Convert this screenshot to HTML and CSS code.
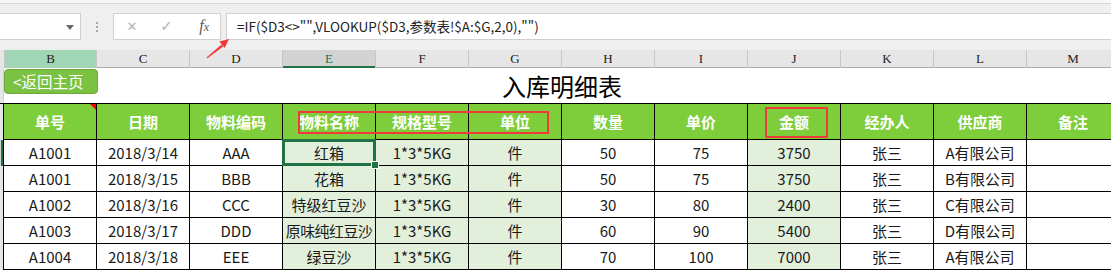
FILE: index.html
```html
<!DOCTYPE html>
<html lang="zh-CN">

<head>
  <meta charset="UTF-8">
  <meta name="viewport" content="width=device-width, initial-scale=1.0">
  <title>入库明细表</title>
  <link rel="stylesheet" href="styles.css">
</head>

<body>
  <div class="app">
    <!-- Formula bar -->
    <div class="toolbar">
      <div class="name-box"><span class="caret"></span></div>
      <div class="grip"><i></i><i></i><i></i></div>
      <div class="fx-buttons">
        <span class="fx-btn cancel">✕</span>
        <span class="fx-btn ok">✓</span>
        <span class="fx-btn fx"><em>f</em><em class="x">x</em></span>
      </div>
      <div class="formula">=IF($D3&lt;&gt;"",VLOOKUP($D3,参数表!$A:$G,2,0),"")</div>
    </div>

    <!-- Column letters -->
    <div class="row col-heads">
      <div class="corner"></div>
      <div class="col-head selected">B</div>
      <div class="col-head">C</div>
      <div class="col-head">D</div>
      <div class="col-head active">E</div>
      <div class="col-head">F</div>
      <div class="col-head">G</div>
      <div class="col-head">H</div>
      <div class="col-head">I</div>
      <div class="col-head">J</div>
      <div class="col-head">K</div>
      <div class="col-head">L</div>
      <div class="col-head">M</div>
    </div>

    <!-- Title row -->
    <div class="row title-row">
      <div class="row-strip"></div>
      <div class="title-cell">入库明细表</div>
      <a class="home-btn" href="#">&lt;返回主页</a>
    </div>

    <!-- Table header -->
    <div class="row head-row">
      <div class="row-strip"></div>
      <div class="cell th has-comment">单号</div>
      <div class="cell th">日期</div>
      <div class="cell th">物料编码</div>
      <div class="cell th">物料名称</div>
      <div class="cell th">规格型号</div>
      <div class="cell th">单位</div>
      <div class="cell th">数量</div>
      <div class="cell th">单价</div>
      <div class="cell th">金额</div>
      <div class="cell th">经办人</div>
      <div class="cell th">供应商</div>
      <div class="cell th">备注</div>
    </div>

    <div class="row data-row">
      <div class="row-strip current"></div>
      <div class="cell">A1001</div>
      <div class="cell">2018/3/14</div>
      <div class="cell">AAA</div>
      <div class="cell tint selected-cell">红箱<span class="handle"></span></div>
      <div class="cell tint">1*3*5KG</div>
      <div class="cell tint">件</div>
      <div class="cell">50</div>
      <div class="cell">75</div>
      <div class="cell tint">3750</div>
      <div class="cell">张三</div>
      <div class="cell">A有限公司</div>
      <div class="cell"></div>
    </div>

    <div class="row data-row">
      <div class="row-strip"></div>
      <div class="cell">A1001</div>
      <div class="cell">2018/3/15</div>
      <div class="cell">BBB</div>
      <div class="cell tint">花箱</div>
      <div class="cell tint">1*3*5KG</div>
      <div class="cell tint">件</div>
      <div class="cell">50</div>
      <div class="cell">75</div>
      <div class="cell tint">3750</div>
      <div class="cell">张三</div>
      <div class="cell">B有限公司</div>
      <div class="cell"></div>
    </div>

    <div class="row data-row">
      <div class="row-strip"></div>
      <div class="cell">A1002</div>
      <div class="cell">2018/3/16</div>
      <div class="cell">CCC</div>
      <div class="cell tint">特级红豆沙</div>
      <div class="cell tint">1*3*5KG</div>
      <div class="cell tint">件</div>
      <div class="cell">30</div>
      <div class="cell">80</div>
      <div class="cell tint">2400</div>
      <div class="cell">张三</div>
      <div class="cell">C有限公司</div>
      <div class="cell"></div>
    </div>

    <div class="row data-row">
      <div class="row-strip"></div>
      <div class="cell">A1003</div>
      <div class="cell">2018/3/17</div>
      <div class="cell">DDD</div>
      <div class="cell tint tight">原味纯红豆沙</div>
      <div class="cell tint">1*3*5KG</div>
      <div class="cell tint">件</div>
      <div class="cell">60</div>
      <div class="cell">90</div>
      <div class="cell tint">5400</div>
      <div class="cell">张三</div>
      <div class="cell">D有限公司</div>
      <div class="cell"></div>
    </div>

    <div class="row data-row">
      <div class="row-strip"></div>
      <div class="cell">A1004</div>
      <div class="cell">2018/3/18</div>
      <div class="cell">EEE</div>
      <div class="cell tint">绿豆沙</div>
      <div class="cell tint">1*3*5KG</div>
      <div class="cell tint">件</div>
      <div class="cell">70</div>
      <div class="cell">100</div>
      <div class="cell tint">7000</div>
      <div class="cell">张三</div>
      <div class="cell">A有限公司</div>
      <div class="cell"></div>
    </div>

    <!-- Annotations drawn over the sheet -->
    <div class="mark mark-name"></div>
    <div class="mark mark-amount"></div>
    <svg class="arrow" width="40" height="30" viewBox="200 35 40 30">
      <path d="M206.5 57.5 L221.6 44.6 L223.2 46.4 L207.5 58.3 Z" fill="#f03a3a" />
      <path d="M229 39 L219.3 41.4 L224.7 47.9 Z" fill="#f03a3a" />
    </svg>
  </div>
</body>

</html>
```

FILE: styles.css
```css
/* Page reset */
body {
  margin: 0;
  overflow: hidden;
  background-color: #ffffff;
  font-family: "Noto Sans CJK SC", "Noto Sans", sans-serif;
  color: #1a1a1a;
}

.app {
  position: relative;
  width: 1111px;
  height: 272px;
  overflow: hidden;
}

/* Formula bar */
.toolbar {
  height: 50px;
  box-sizing: border-box;
  margin: 0;
  padding-top: 10px;
  border-top: 3px solid #f7f7f7;
  background-color: #efefef;
  display: flex;
  align-items: flex-start;
  box-shadow: inset 0 1px 0 #d6d6d6;
}

.name-box {
  width: 81px;
  height: 27px;
  box-sizing: border-box;
  background-color: #ffffff;
  border: 1px solid #d0d0d0;
  border-left: none;
  position: relative;
}

.caret {
  position: absolute;
  right: 6px;
  top: 11px;
  border-left: 4px solid transparent;
  border-right: 4px solid transparent;
  border-top: 5px solid #6b6b6b;
}

.grip {
  width: 32px;
  height: 27px;
  display: flex;
  flex-direction: column;
  align-items: center;
  justify-content: center;
  gap: 2px;
}

.grip i {
  display: block;
  width: 2px;
  height: 2px;
  background-color: #a8a8a8;
}

.fx-buttons {
  width: 108px;
  height: 27px;
  box-sizing: border-box;
  background-color: #ffffff;
  border: 1px solid #d0d0d0;
  display: flex;
  align-items: center;
}

.fx-btn {
  width: 36px;
  text-align: center;
  color: #b4b4b4;
  font-family: "DejaVu Sans", sans-serif;
  font-size: 15px;
  line-height: 25px;
}

.fx-btn.cancel {
  padding-left: 2px;
  font-size: 13px;
}

.fx-btn.ok {
  font-weight: bold;
  padding-left: 3px;
}

.fx-btn.fx {
  color: #5a5a5a;
  font-family: "Liberation Serif", serif;
  font-size: 16px;
  padding-left: 6px;
}

.fx-btn.fx .x {
  font-size: 12px;
}

.formula {
  flex: 1;
  height: 27px;
  box-sizing: border-box;
  margin-left: 5px;
  padding-left: 10px;
  background-color: #ffffff;
  border: 1px solid #d0d0d0;
  border-right: none;
  font-size: 13.5px;
  line-height: 25px;
  color: #222222;
  white-space: nowrap;
}

/* Sheet grid */
.row {
  display: grid;
  grid-template-columns: 4px repeat(12, 93px);
}

.col-heads {
  height: 18px;
  background-color: #e6e6e6;
  border-bottom: 1px solid #ababab;
  box-sizing: border-box;
}

.corner {
  background-color: #e6e6e6;
}

.col-head {
  box-sizing: border-box;
  border-right: 1px solid #c6c6c6;
  text-align: center;
  font-family: "Liberation Serif", serif;
  font-size: 13px;
  line-height: 18px;
  color: #222222;
}

.col-head.selected {
  background-color: #a0d6b5;
  border-left: 1px solid #c6c6c6;
}

.col-head.active {
  background-color: #d3d3d3;
  color: #217346;
  box-shadow: inset 0 -2px 0 #217346;
}

.row-strip {
  background-color: #e6e6e6;
  border-right: 1px solid #000000;
}

.row-strip.current {
  background-color: #d3d3d3;
  box-shadow: inset -2px 0 0 #217346;
}

.title-row {
  height: 36px;
  position: relative;
  border-bottom: 1px solid #000000;
  box-sizing: border-box;
}

.title-row .row-strip {
  border-right-color: #d0d0d0;
}

.title-cell {
  grid-column: 2 / 14;
  text-align: center;
  font-size: 24px;
  line-height: 35px;
  color: #000000;
}

.home-btn {
  position: absolute;
  left: 4px;
  top: 1px;
  width: 94px;
  height: 25px;
  box-sizing: border-box;
  background-color: #7cc242;
  border: 1px solid #6aa936;
  border-radius: 4px;
  color: #ffffff;
  font-size: 15.5px;
  line-height: 22px;
  padding-left: 8px;
  text-decoration: none;
}

.cell {
  box-sizing: border-box;
  border-right: 1px solid #000000;
  border-bottom: 1px solid #000000;
  text-align: center;
  white-space: nowrap;
  overflow: visible;
  position: relative;
}

.head-row {
  height: 36px;
}

.th {
  background-color: #7ecd3b;
  color: #ffffff;
  font-weight: bold;
  font-size: 15px;
  line-height: 35px;
}

.has-comment::after {
  content: "";
  position: absolute;
  right: 0;
  top: 0;
  border-top: 6px solid #ff0000;
  border-left: 6px solid transparent;
}

.data-row {
  height: 26px;
}

.data-row .cell {
  font-size: 15px;
  line-height: 25px;
}

.tint {
  background-color: #e2efda;
}

.tight {
  letter-spacing: -0.6px;
  font-size: 14.5px;
}

.selected-cell {
  box-shadow: inset 0 0 0 2px #217346;
  border-top: 0;
}

.selected-cell::before {
  content: "";
  position: absolute;
  left: -1px;
  right: -1px;
  top: -1px;
  bottom: -1px;
  border: 2px solid #217346;
  pointer-events: none;
}

.handle {
  position: absolute;
  right: -4px;
  bottom: -4px;
  width: 6px;
  height: 6px;
  background-color: #217346;
  border: 1px solid #ffffff;
  z-index: 2;
}

/* Red markup */
.mark {
  position: absolute;
  border: 2px solid #f03a3a;
  box-sizing: border-box;
}

.mark-name {
  left: 298px;
  top: 111px;
  width: 251px;
  height: 23px;
}

.mark-amount {
  left: 765px;
  top: 107px;
  width: 63px;
  height: 31px;
}

.arrow {
  position: absolute;
  left: 200px;
  top: 35px;
}
```
